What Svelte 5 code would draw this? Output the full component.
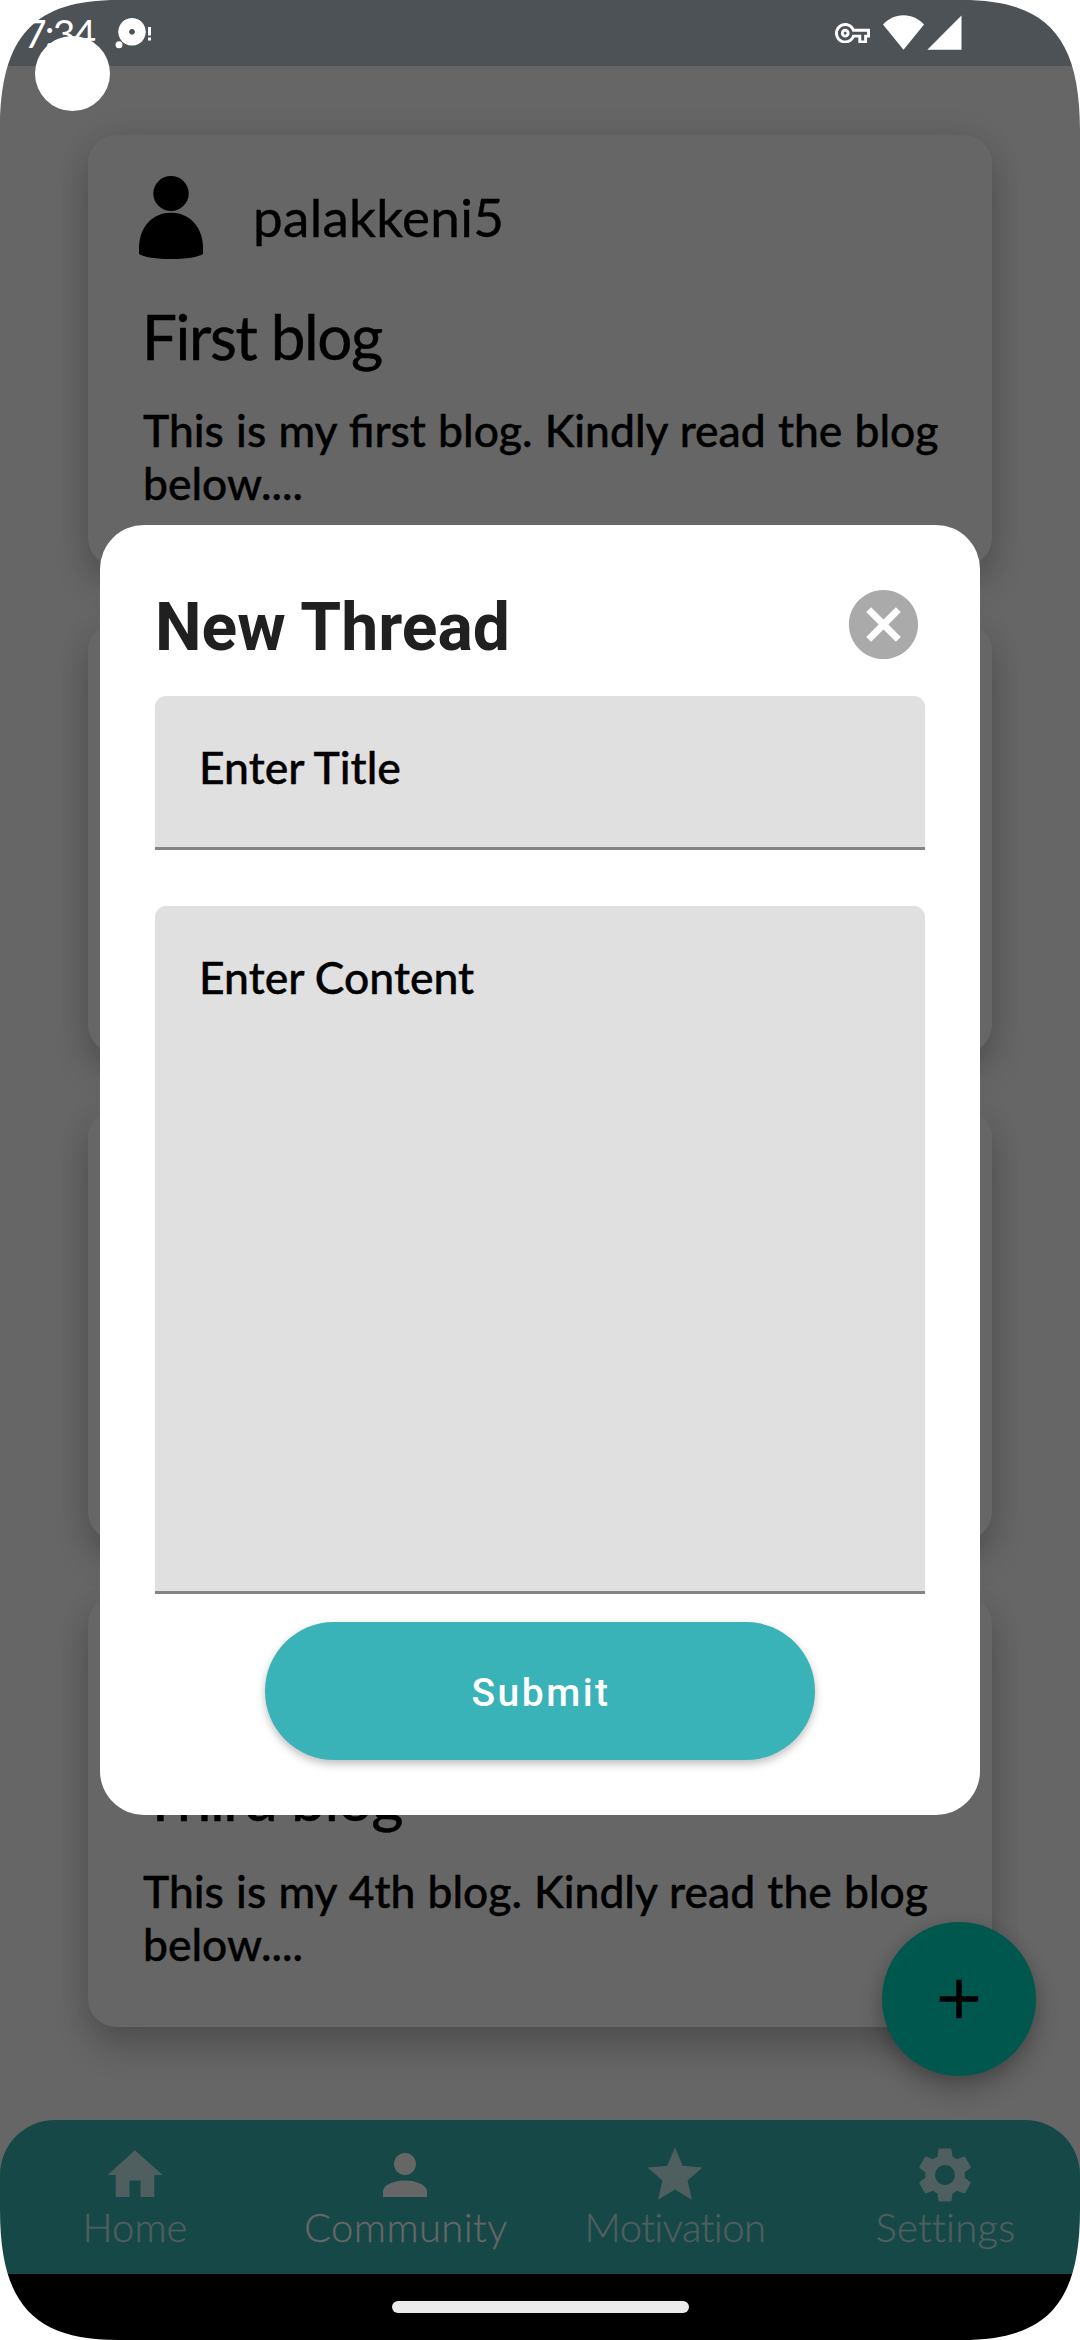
<script>
  const posts = [
    {
      id: 1,
      author: 'palakkeni5',
      title: 'First blog',
      text: 'This is my first blog. Kindly read the blog below....',
    },
    { id: 2 },
    { id: 3 },
    {
      id: 4,
      title: 'Third blog',
      text: 'This is my 4th blog. Kindly read the blog below....',
    },
  ];

  const tabs = [
    { key: 'home', label: 'Home', icon: 'M10 20v-6h4v6h5v-8h3L12 3 2 12h3v8z' },
    {
      key: 'community',
      label: 'Community',
      active: true,
      icon: 'M12 12c2.21 0 4-1.79 4-4s-1.79-4-4-4-4 1.79-4 4 1.79 4 4 4zm0 2c-4.42 0-8 1.79-8 4v2h16v-2c0-2.21-3.58-4-8-4z',
    },
    {
      key: 'motivation',
      label: 'Motivation',
      icon: 'M12 17.27L18.18 21l-1.64-7.03L22 9.24l-7.19-.61L12 2 9.19 8.63 2 9.24l5.46 4.73L5.82 21z',
    },
    {
      key: 'settings',
      label: 'Settings',
      icon: 'M19.14 12.94c.04-.3.06-.61.06-.94 0-.32-.02-.64-.07-.94l2.03-1.58c.18-.14.23-.41.12-.61l-1.92-3.32c-.12-.22-.37-.29-.59-.22l-2.39.96c-.5-.38-1.03-.7-1.62-.94l-.36-2.54c-.04-.24-.24-.41-.48-.41h-3.84c-.24 0-.43.17-.47.41l-.36 2.54c-.59.24-1.13.57-1.62.94l-2.39-.96c-.22-.08-.47 0-.59.22L2.74 8.87c-.12.21-.08.47.12.61l2.03 1.58c-.05.3-.09.63-.09.94s.02.64.07.94l-2.03 1.58c-.18.14-.23.41-.12.61l1.92 3.32c.12.22.37.29.59.22l2.39-.96c.5.38 1.03.7 1.62.94l.36 2.54c.05.24.24.41.48.41h3.84c.24 0 .44-.17.47-.41l.36-2.54c.59-.24 1.13-.56 1.62-.94l2.39.96c.22.08.47 0 .59-.22l1.92-3.32c.12-.22.07-.47-.12-.61l-2.01-1.58zM12 15.6c-1.98 0-3.6-1.62-3.6-3.6s1.62-3.6 3.6-3.6 3.6 1.62 3.6 3.6-1.62 3.6-3.6 3.6z',
    },
  ];
</script>

<div class="screen">
  <header class="status">
    <span class="clock">7:34</span>
    <svg class="notice" viewBox="0 0 38 34">
      <path fill-rule="evenodd" d="M17 1a13.8 13.8 0 1 0 .01 0zM17 12a2.9 2.9 0 1 1-.01 0z" />
      <circle cx="4" cy="27.7" r="3.5" />
      <path d="M33 10h3v8.500h-3zM33 20.500h3v3h-3z" />
    </svg>
    <span class="spacer"></span>
    <svg class="key" viewBox="0 5 24 14">
      <path d="M22 19h-6v-4h-2.68c-1.14 2.42-3.6 4-6.32 4-3.86 0-7-3.14-7-7s3.14-7 7-7c2.72 0 5.17 1.58 6.32 4H24v6h-2v4zm-4-2h2v-4h2v-2H11.94l-.23-.67C11.01 8.34 9.11 7 7 7c-2.760 0-5 2.240-5 5s2.240 5 5 5c2.110 0 4.010-1.340 4.710-3.330l.23-.67H18v4zM7 15c-1.650 0-3-1.350-3-3s1.350-3 3-3 3 1.350 3 3-1.350 3-3 3zm0-4c-.55 0-1 .45-1 1s.45 1 1 1 1-.45 1-1-.45-1-1-1z" />
    </svg>
    <svg class="wifi" viewBox="0 0 41 35">
      <path d="M0 9.500C5 4 12 .2 20.500 .2S36 4 41 9.500L20.500 34.700z" />
    </svg>
    <svg class="signal" viewBox="0 0 35 35"><path d="M34.500 .5v34.300H.3z" /></svg>
  </header>

  <main class="feed">
    {#each posts as post (post.id)}
      <article class="card">
        <div class="author">
          {#if post.author}
            <svg class="avatar" viewBox="0 0 64 83">
              <ellipse cx="32" cy="17.500" rx="17.700" ry="17.500" />
              <path d="M0 78V70C1 50 14 36.700 32 36.700S63 50 64 70V78C60 81 46 83 32 83S4 81 0 78z" />
            </svg>
            <span class="name">{post.author}</span>
          {/if}
        </div>
        {#if post.title}
          <h2>{post.title}</h2>
          <p>{post.text}</p>
        {/if}
      </article>
    {/each}
  </main>

  <nav class="tabs">
    {#each tabs as tab (tab.key)}
      <div class="tab {tab.key}" class:active={tab.active}>
        <svg viewBox="0 0 24 24"><path d={tab.icon} /></svg>
        <span>{tab.label}</span>
      </div>
    {/each}
  </nav>

  <footer class="gesture"><span class="handle"></span></footer>

  <button class="fab" aria-label="Add thread">
    <svg viewBox="0 0 24 24"><path d="M19 13h-6v6h-2v-6H5v-2h6V5h2v6h6v2z" /></svg>
  </button>

  <section class="dialog">
    <div class="heading">
      <h1>New Thread</h1>
      <svg class="close" viewBox="0 0 24 24">
        <path d="M12 2C6.470 2 2 6.470 2 12s4.470 10 10 10 10-4.470 10-10S17.530 2 12 2zm5 13.590L15.590 17 12 13.410 8.410 17 7 15.590 10.590 12 7 8.410 8.410 7 12 10.590 15.590 7 17 8.410 13.410 12 17 15.590z" />
      </svg>
    </div>
    <div class="field title">Enter Title</div>
    <div class="field content">Enter Content</div>
    <button class="submit">Submit</button>
  </section>

  <span class="camera"></span>
  <svg class="corner tl" viewBox="0 0 130 130"><path d="M0 0H118C35 0 0 35 0 130z" /></svg>
  <svg class="corner tr" viewBox="0 0 130 130"><path d="M0 0H118C35 0 0 35 0 130z" /></svg>
  <svg class="corner bl" viewBox="0 0 130 130"><path d="M0 0H118C35 0 0 35 0 130z" /></svg>
  <svg class="corner br" viewBox="0 0 130 130"><path d="M0 0H118C35 0 0 35 0 130z" /></svg>
</div>

<style>
  :global(body) {
    background: #fff;
  }
  .screen {
    position: relative;
    width: 1080px;
    height: 2340px;
    overflow: hidden;
    display: flex;
    flex-direction: column;
    background: #666;
    color: #000;
    font-family: Lato, 'Liberation Sans', sans-serif;
  }
  .screen * {
    box-sizing: border-box;
  }
  svg {
    display: block;
    flex: none;
  }

  .status {
    flex: none;
    height: 66px;
    display: flex;
    align-items: flex-start;
    padding: 15px 118px 0 24px;
    background: #4c5256;
    color: #fff;
    fill: #fff;
  }
  .clock {
    width: 91px;
    font-size: 39px;
    line-height: 36px;
    letter-spacing: -1.8px;
  }
  .notice {
    width: 38px;
    height: 34px;
    margin-top: 2px;
  }
  .spacer {
    flex: 1;
  }
  .key {
    width: 35px;
    height: 20.400px;
    margin: 8px 13px 0 0;
  }
  .wifi {
    width: 41px;
    height: 35px;
    margin-right: 3px;
  }
  .signal {
    width: 35px;
    height: 35px;
  }

  .feed {
    flex: 1;
    min-height: 0;
    display: flex;
    flex-direction: column;
    gap: 56px;
    padding: 69px 88px 0;
  }
  .card {
    flex: none;
    height: 431px;
    border-radius: 28px;
    background: #666;
    box-shadow:
      0 20px 34px rgba(0, 0, 0, 0.2),
      0 0 34px rgba(0, 0, 0, 0.07);
  }
  .author {
    height: 160px;
    padding: 4px 0 0 51px;
    display: flex;
    align-items: center;
    gap: 50px;
  }
  .avatar {
    width: 64px;
    height: 83px;
  }
  .name {
    font-size: 53px;
    line-height: 60px;
    letter-spacing: 0.300px;
    -webkit-text-stroke: 0.400px currentColor;
  }
  h2 {
    margin: 1px 0 0 54px;
    font-size: 62px;
    line-height: 80px;
    font-weight: 400;
    letter-spacing: -1.400px;
    -webkit-text-stroke: 0.500px currentColor;
  }
  p {
    margin: 27px 40px 0 55px;
    font-size: 44.400px;
    line-height: 53px;
    font-weight: 500;
    word-spacing: 1px;
    -webkit-text-stroke: 0.400px currentColor;
  }

  .tabs {
    flex: none;
    height: 154px;
    display: grid;
    grid-template-columns: repeat(4, 1fr);
    border-radius: 55px 55px 0 0;
    background: #174848;
    color: #4f5f5f;
    fill: #4f5f5f;
  }
  .tab {
    display: flex;
    flex-direction: column;
    align-items: center;
    padding-top: 22px;
  }
  .tab svg {
    width: 66px;
    height: 66px;
  }
  .tab span {
    max-width: 204px;
    overflow: hidden;
    white-space: nowrap;
    font-size: 40px;
    line-height: 48px;
    margin-top: -5px;
    font-weight: 300;
    -webkit-text-stroke: 0.300px currentColor;
  }
  .community span {
    padding-left: 1px;
    letter-spacing: 0.400px;
  }
  .motivation span {
    letter-spacing: -0.500px;
  }
  .settings span {
    padding-left: 1px;
    letter-spacing: 0.300px;
  }
  .active {
    color: #666;
    fill: #666;
  }

  .gesture {
    flex: none;
    height: 66px;
    display: flex;
    align-items: center;
    justify-content: center;
    background: #000;
  }
  .handle {
    width: 297px;
    height: 12px;
    border-radius: 6px;
    background: #ebebeb;
  }

  .fab {
    position: absolute;
    left: 882px;
    top: 1922px;
    width: 154px;
    height: 154px;
    padding: 0;
    border: 0;
    border-radius: 50%;
    display: flex;
    align-items: center;
    justify-content: center;
    background: #00574e;
    box-shadow:
      0 14px 26px rgba(0, 0, 0, 0.24),
      0 2px 14px rgba(0, 0, 0, 0.12);
  }
  .fab svg {
    width: 66px;
    height: 66px;
  }

  .dialog {
    position: absolute;
    left: 100px;
    top: 525px;
    width: 880px;
    height: 1290px;
    padding: 55px 55px 0;
    border-radius: 44px;
    display: flex;
    flex-direction: column;
    background: #fff;
  }
  .heading {
    height: 116px;
    display: flex;
    justify-content: space-between;
    padding-top: 3px;
  }
  h1 {
    margin: 6px 0 0;
    font-family: Roboto, sans-serif;
    font-size: 66px;
    line-height: 78px;
    font-weight: 700;
    color: #202020;
  }
  .close {
    width: 83px;
    height: 83px;
    fill: #aaa;
  }
  .field {
    flex: none;
    padding: 44px 44px 0 44px;
    border-bottom: 3px solid #858585;
    border-radius: 11px 11px 0 0;
    background: #e0e0e0;
    font-size: 44.500px;
    line-height: 53px;
    font-weight: 500;
    -webkit-text-stroke: 0.400px currentColor;
  }
  .title {
    height: 154px;
  }
  .content {
    height: 688px;
    margin-top: 56px;
  }
  .submit {
    width: 550px;
    height: 138px;
    margin: 28px auto 0;
    padding: 4px 0 0 2px;
    border: 0;
    border-radius: 69px;
    background: #39b2b8;
    color: #fff;
    font-family: Roboto, sans-serif;
    font-size: 39px;
    font-weight: 500;
    letter-spacing: 2.500px;
    box-shadow: 0 4px 8px rgba(0, 0, 0, 0.25);
  }

  .camera {
    position: absolute;
    left: 35px;
    top: 36px;
    width: 75px;
    height: 75px;
    border-radius: 50%;
    background: #fff;
  }
  .corner {
    position: absolute;
    width: 130px;
    height: 130px;
    fill: #fff;
  }
  .tl {
    left: 0;
    top: 0;
  }
  .tr {
    right: 0;
    top: 0;
    transform: scaleX(-1);
  }
  .bl {
    left: 0;
    bottom: 0;
    transform: scaleY(-1);
  }
  .br {
    right: 0;
    bottom: 0;
    transform: scale(-1);
  }
</style>
